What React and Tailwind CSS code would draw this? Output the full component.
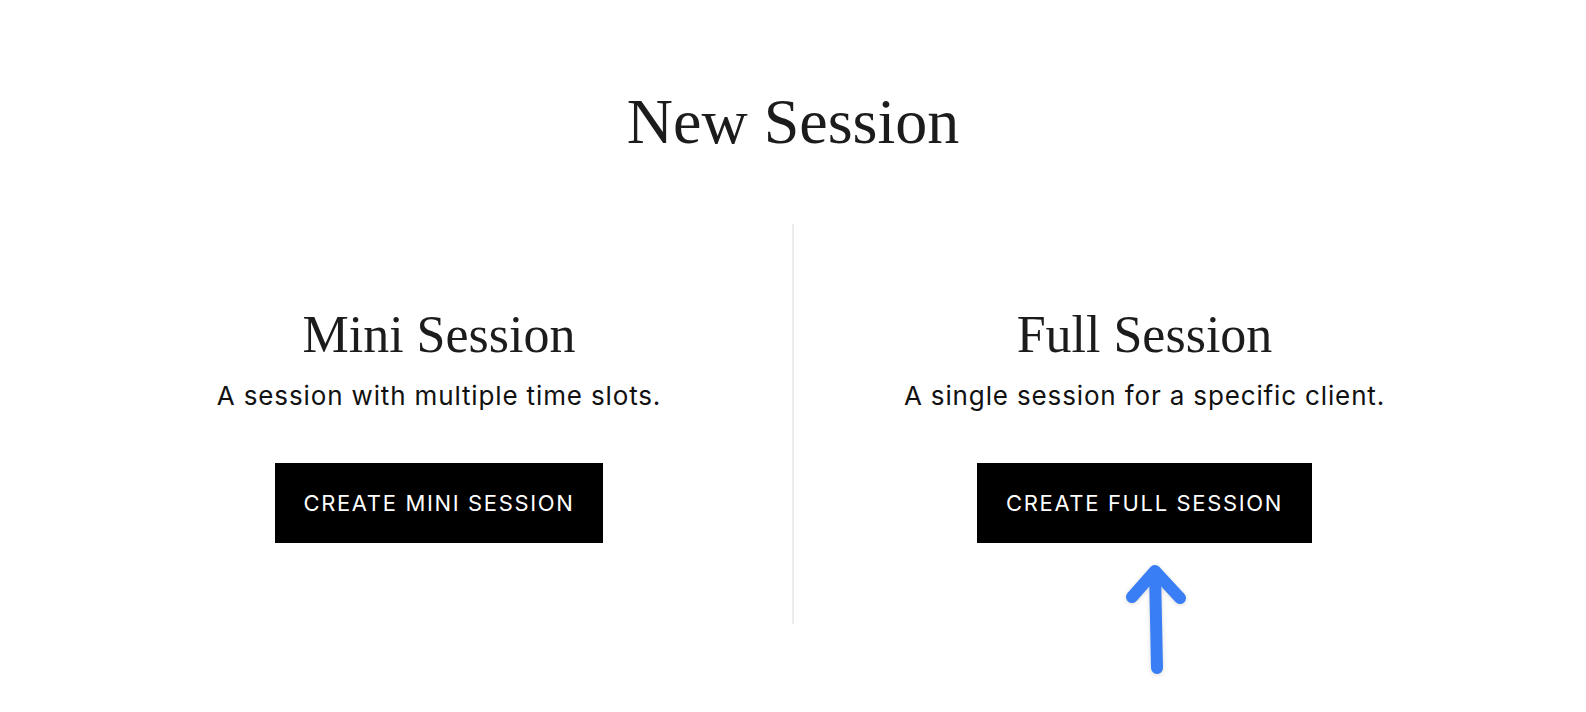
export default function App() {
  const serif = { fontFamily: '"Liberation Serif", "DejaVu Serif", serif' };
  const sans = { fontFamily: 'Inter, "Liberation Sans", sans-serif' };
  return (
    <div className="relative min-h-screen w-full bg-white text-[#1a1a1a]" style={sans}>
      <div className="pt-[90px] flex justify-center">
        <h1 className="text-[64px] leading-none font-normal text-[#1c1c1c]" style={serif}>
          New Session
        </h1>
      </div>
      <div className="mt-[70px] grid grid-cols-[706px_2px_701px] pl-[86px] pr-[91px]">
        <div className="h-[400px] flex flex-col items-center justify-center">
          <h2 className="text-[52px] leading-[60px] text-[#1c1c1c]" style={serif}>Mini Session</h2>
          <p className="mt-[16px] text-[26px] leading-[30px] tracking-[0.033em] text-[#111]">A session with multiple time slots.</p>
          <button className="mt-[52px] w-[328px] h-[80px] bg-black text-white text-[22px] tracking-[0.075em]">
            CREATE MINI SESSION
          </button>
        </div>
        <div className="bg-[#ececec]" />
        <div className="h-[400px] flex flex-col items-center justify-center">
          <h2 className="text-[52px] leading-[60px] text-[#1c1c1c]" style={serif}>Full Session</h2>
          <p className="mt-[16px] text-[26px] leading-[30px] tracking-[0.033em] text-[#111]">A single session for a specific client.</p>
          <button className="mt-[52px] w-[335px] h-[80px] bg-black text-white text-[22px] tracking-[0.075em]">
            CREATE FULL SESSION
          </button>
        </div>
      </div>
      <svg className="absolute left-[1118px] top-[548px] drop-shadow-[0_1px_2px_rgba(0,0,0,0.15)]" width="74" height="134" viewBox="0 0 74 134">
        <g fill="none" stroke="#3a7ef6" strokeWidth="12" strokeLinecap="round" strokeLinejoin="round">
          <path d="M37 24 L39 120" />
          <path d="M14 49 L37 23 L62 50" />
        </g>
      </svg>
    </div>
  );
}
